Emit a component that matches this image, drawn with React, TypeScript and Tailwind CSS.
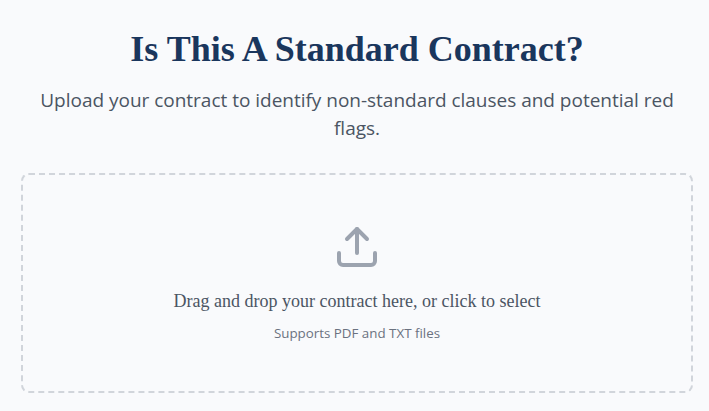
import React, { useRef, useState } from "react";

const UploadIcon = () => (
  <svg className="w-12 h-12 text-[#9ca3af]" viewBox="0 0 24 24" fill="none" stroke="currentColor" strokeWidth="2" strokeLinecap="round" strokeLinejoin="round">
    <path d="M21 15v4a2 2 0 0 1-2 2H5a2 2 0 0 1-2-2v-4" />
    <polyline points="17 8 12 3 7 8" />
    <line x1="12" x2="12" y1="3" y2="15" />
  </svg>
);

const App = () => {
  const inputRef = useRef<HTMLInputElement>(null);
  const [file, setFile] = useState<File | null>(null);

  const handleDrop = (e: React.DragEvent) => {
    e.preventDefault();
    setFile(e.dataTransfer.files[0] || null);
  };

  return (
    <div className="min-h-screen bg-[#f9fafc] pl-[21px] pr-4 pt-[29px]">
      <div className="text-center mb-[31px]">
        <h1 className="font-['Liberation_Serif',serif] font-bold text-4xl leading-10 text-[#1a365d] mb-[17px]">Is This A Standard Contract?</h1>
        <p className="font-['Open_Sans',sans-serif] px-4 text-[19px] leading-7 tracking-[-0.015px] text-[#4b5563]">Upload your contract to identify non-standard clauses and potential red flags.</p>
      </div>
      <div
        className="h-[220px] border-2 border-dashed border-[#d1d5db] rounded-lg flex flex-col items-center pt-12 text-center cursor-pointer"
        onClick={() => inputRef.current?.click()}
        onDragOver={e => e.preventDefault()}
        onDrop={handleDrop}
      >
        <input ref={inputRef} type="file" accept=".pdf,.txt" className="hidden" onChange={e => setFile(e.target.files?.[0] || null)} />
        <UploadIcon />
        <p className="mt-4 font-['Liberation_Serif',serif] text-lg leading-7 text-[#4b5563]">{file ? file.name : "Drag and drop your contract here, or click to select"}</p>
        <p className="mt-2 font-['Open_Sans',sans-serif] text-[13.35px] leading-5 text-[#6b7280]">Supports PDF and TXT files</p>
      </div>
    </div>
  );
};
export default App;
